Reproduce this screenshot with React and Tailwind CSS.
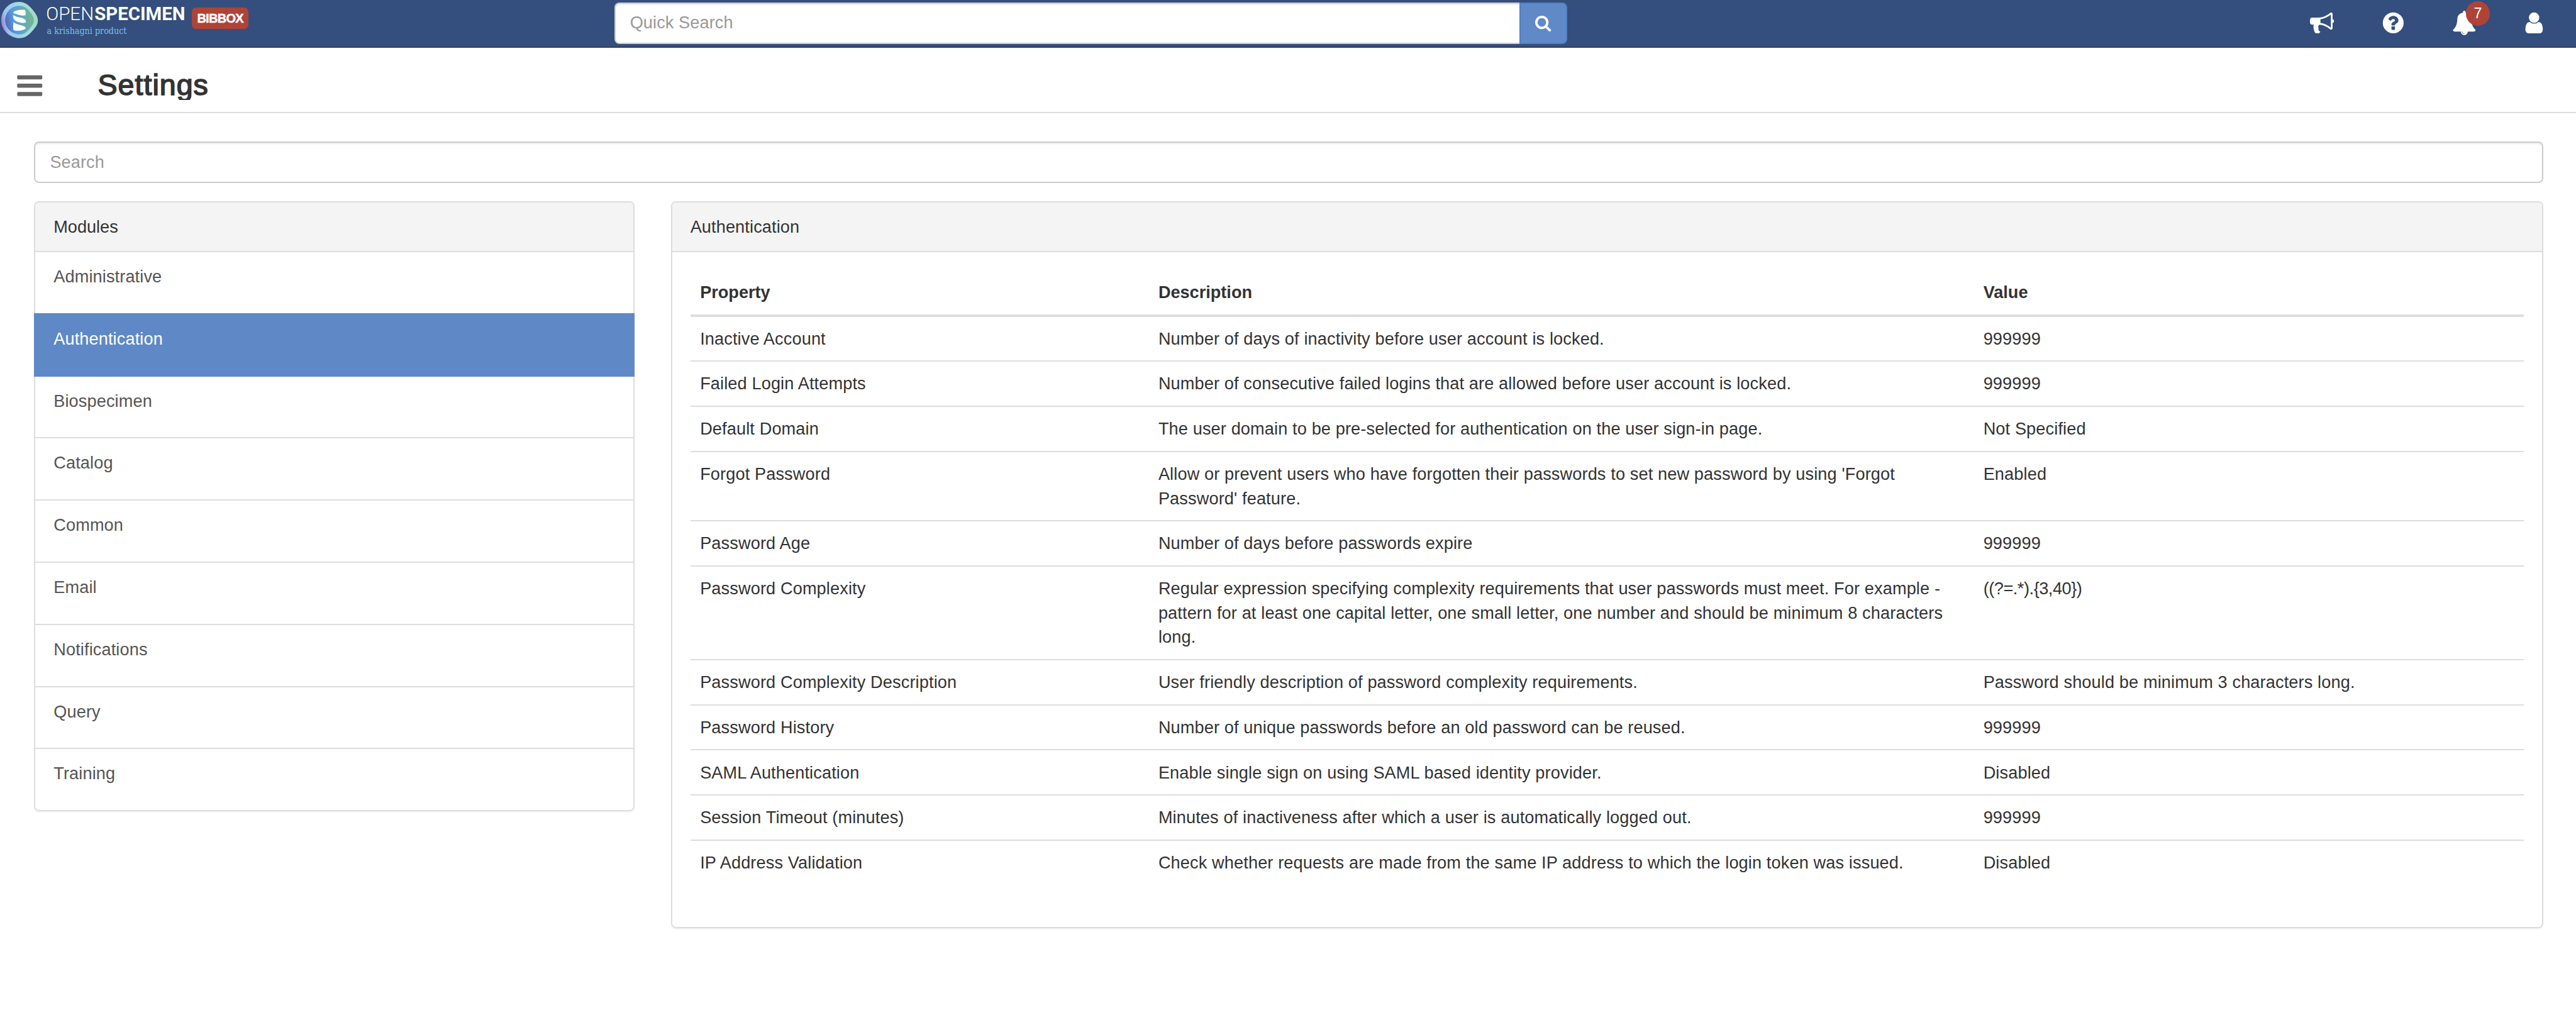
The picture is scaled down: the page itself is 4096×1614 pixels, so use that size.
const modules = [
  'Administrative',
  'Authentication',
  'Biospecimen',
  'Catalog',
  'Common',
  'Email',
  'Notifications',
  'Query',
  'Training',
];

const settings = [
  ['Inactive Account', 'Number of days of inactivity before user account is locked.', '999999'],
  ['Failed Login Attempts', 'Number of consecutive failed logins that are allowed before user account is locked.', '999999'],
  ['Default Domain', 'The user domain to be pre-selected for authentication on the user sign-in page.', 'Not Specified'],
  ['Forgot Password', "Allow or prevent users who have forgotten their passwords to set new password by using 'Forgot Password' feature.", 'Enabled'],
  ['Password Age', 'Number of days before passwords expire', '999999'],
  ['Password Complexity', 'Regular expression specifying complexity requirements that user passwords must meet. For example - pattern for at least one capital letter, one small letter, one number and should be minimum 8 characters long.', '((?=.*).{3,40})'],
  ['Password Complexity Description', 'User friendly description of password complexity requirements.', 'Password should be minimum 3 characters long.'],
  ['Password History', 'Number of unique passwords before an old password can be reused.', '999999'],
  ['SAML Authentication', 'Enable single sign on using SAML based identity provider.', 'Disabled'],
  ['Session Timeout (minutes)', 'Minutes of inactiveness after which a user is automatically logged out.', '999999'],
  ['IP Address Validation', 'Check whether requests are made from the same IP address to which the login token was issued.', 'Disabled'],
];

const icons = {
  bullhorn:
    'M1664 640q53 0 90.5 37.5t37.5 90.5-37.5 90.5-90.5 37.5v384q0 52-38 90t-90 38q-417-347-812-380-58 19-91 66t-31 100.5 40 92.5q-20 33-23 65.5t6 58 33.5 55 48 50 61.5 50.5q-29 58-111.5 83t-168.5 11.5-132-55.5q-7-23-29.5-87.5t-32-94.5-23-89-15-101 3.5-98.5 22-110.5h-122q-66 0-113-47t-47-113v-192q0-66 47-113t113-47h480q435 0 896-384 52 0 90 38t38 90v384zm-128 604v-954q-394 302-768 343v270q377 42 768 341z',
  question:
    'M1024 1376v-192q0-14-9-23t-23-9h-192q-14 0-23 9t-9 23v192q0 14 9 23t23 9h192q14 0 23-9t9-23zm256-672q0-88-55.5-163t-138.5-116-170-41q-243 0-371 213-15 24 8 42l132 100q7 6 19 6 16 0 25-12 53-68 86-92 34-24 86-24 48 0 85.5 26t37.5 59q0 38-20 61t-68 45q-63 28-115.5 86.5t-52.5 125.5v36q0 14 9 23t23 9h192q14 0 23-9t9-23q0-19 21.5-49.5t54.5-49.5q32-18 49-28.5t46-35 44.5-48 28-60.5 12.5-81zm384 192q0 209-103 385.5t-279.5 279.5-385.5 103-385.5-103-279.5-279.5-103-385.5 103-385.5 279.5-279.5 385.5-103 385.5 103 279.5 279.5 103 385.5z',
  bell:
    'M912 1696q0-16-16-16-59 0-101.5-42.5t-42.5-101.5q0-16-16-16t-16 16q0 73 51.5 124.5t124.5 51.5q16 0 16-16zm816-288q0 52-38 90t-90 38h-448q0 106-75 181t-181 75-181-75-75-181h-448q-52 0-90-38t-38-90q50-42 91-88t85-119.5 74.5-158.5 50-206 19.5-260q0-152 117-282.5t307-158.5q-8-19-8-39 0-40 28-68t68-28 68 28 28 68q0 20-8 39 190 28 307 158.5t117 282.5q0 139 19.5 260t50 206 74.5 158.5 85 119.5 91 88z',
  user:
    'M1536 1399q0 109-62.5 187t-150.5 78h-854q-88 0-150.5-78t-62.5-187q0-85 8.5-160.5t31.5-152 58.5-131 94-89 134.5-34.5q131 128 313 128t313-128q76 0 134.5 34.5t94 89 58.5 131 31.5 152 8.5 160.5zm-256-887q0 159-112.5 271.5t-271.5 112.5-271.5-112.5-112.5-271.5 112.5-271.5 271.5-112.5 271.5 112.5 112.5 271.5z',
  search:
    'M1216 832q0-185-131.5-316.5t-316.5-131.5-316.5 131.5-131.5 316.5 131.5 316.5 316.5 131.5 316.5-131.5 131.5-316.5zm512 832q0 52-38 90t-90 38q-54 0-90-38l-343-342q-179 124-399 124-143 0-273.5-55.5t-225-150-150-225-55.5-273.5 55.5-273.5 150-225 225-150 273.5-55.5 273.5 55.5 225 150 150 225 55.5 273.5q0 220-124 399l343 343q37 37 37 90z',
  bars:
    'M1664 1344v128q0 26-19 45t-45 19h-1408q-26 0-45-19t-19-45v-128q0-26 19-45t45-19h1408q26 0 45 19t19 45zm0-512v128q0 26-19 45t-45 19h-1408q-26 0-45-19t-19-45v-128q0-26 19-45t45-19h1408q26 0 45 19t19 45zm0-512v128q0 26-19 45t-45 19h-1408q-26 0-45-19t-19-45v-128q0-26 19-45t45-19h1408q26 0 45 19t19 45z',
};

function Icon({ name, className }) {
  return (
    <svg viewBox="0 0 1792 1792" fill="currentColor" className={className} aria-hidden="true">
      <path d={icons[name]} />
    </svg>
  );
}

function Logo() {
  return (
    <svg viewBox="0 0 306 76" className="h-[73.63px] w-[296.45px] shrink-0" role="img" aria-label="OpenSpecimen">
      <defs>
        <linearGradient id="ring" x1="0" y1="0.6" x2="1" y2="0.4">
          <stop offset="0" stopColor="#9a7ed2" />
          <stop offset="0.15" stopColor="#9fc4ee" />
          <stop offset="0.6" stopColor="#a4dbe8" />
          <stop offset="1" stopColor="#a0dabb" />
        </linearGradient>
        <linearGradient id="core" x1="0" y1="0.6" x2="1" y2="0.4">
          <stop offset="0" stopColor="#5565bd" />
          <stop offset="0.3" stopColor="#559dda" />
          <stop offset="1" stopColor="#74b98c" />
        </linearGradient>
      </defs>
      <path d="M31 3C43 3 50 11 56 19C64 29 64 37 58 45C51 54 44 62.7 32 62.7C18 62.7 2 51 2 33C2 17 15 3 31 3Z" fill="url(#ring)" />
      <path d="M31.500 9.500C41 9.500 46 15 51 22C57 30 57 36 52.500 42C47 50 41 56.500 32 56.500C21 56.500 8.500 47 8.500 33C8.500 20 19 9.500 31.500 9.500Z" fill="url(#core)" />
      <g fill="#fdfef8">
        <path d="M21.500 21C23 17.500 28 16 40 16Q42.300 16 42.300 24.500C40 26.500 34 25.500 29 24C25.500 22.800 22.500 22 21.500 21Z" />
        <path d="M22 24.500C25 27.500 31 28 36 29.500C40.500 31 43.500 33.500 42.500 37C39 38.500 33 37 28 35.500C23.500 33.500 20.500 30 22 24.500Z" />
        <path d="M22 36C25 39 30 40 35 41.500C40 43 43 44.500 42 47C37 51 27 51 22 49.500Q21 43 22 36Z" />
      </g>
      <g fill="#fdfef8" fontFamily="Roboto, sans-serif" fontSize="30.800">
        <text x="75.500" y="33.500" fontWeight="300" textLength="78.500" lengthAdjust="spacingAndGlyphs">OPEN</text>
        <text x="155" y="33.500" fontWeight="700" textLength="149" lengthAdjust="spacingAndGlyphs">SPECIMEN</text>
      </g>
      <text x="77" y="55.500" fill="#7fbfe8" fontFamily="'DejaVu Serif', serif" fontSize="15" textLength="131" lengthAdjust="spacingAndGlyphs">
        a krishagni product
      </text>
    </svg>
  );
}

function TopBar() {
  return (
    <header className="flex h-[75.56px] items-center border-b-2 border-[#36405a] bg-[#344e7e] text-white">
      <div className="flex h-full w-[976.5px] shrink-0 items-start">
        <Logo />
        <span className="mt-[11.6px] ml-[8.7px] flex h-[34.9px] w-[90.1px] items-center justify-center rounded-[7px] bg-[#b04337] text-[20px] font-bold tracking-[-0.7px] [-webkit-text-stroke:0.5px_white]">
          BIBBOX
        </span>
      </div>
      <div className="flex h-[65.88px]">
        <input
          placeholder="Quick Search"
          className="w-[1439.6px] rounded-l-[8px] border-y-2 border-l-2 border-[#ccc] bg-white px-[23.2px] tracking-[0.1px] shadow-[inset_0_2px_2px_rgba(0,0,0,0.075)] placeholder:text-[#999]"
        />
        <button className="flex w-[75.6px] items-center justify-center rounded-r-[8px] border-2 border-[#5080c0] bg-[#608ac7]">
          <Icon name="search" className="size-[27.13px]" />
        </button>
      </div>
      <nav className="ml-auto flex items-center pr-[47.5px]">
        <Icon name="bullhorn" className="size-[38.75px]" />
        <Icon name="question" className="ml-[74.6px] size-[38.75px]" />
        <span className="relative ml-[74.6px]">
          <Icon name="bell" className="size-[38.75px]" />
          <span className="absolute -top-[15.5px] left-[21.3px] flex size-[38.75px] items-center justify-center rounded-full bg-[#b04337] text-[23.25px] leading-none">
            7
          </span>
        </span>
        <Icon name="user" className="ml-[71.7px] size-[38.75px]" />
      </nav>
    </header>
  );
}

function ModuleList() {
  return (
    <aside className="w-[954.25px] shrink-0 rounded-[8px] border-2 border-[#ddd] shadow-[0_2px_2px_rgba(0,0,0,0.05)]">
      <h2 className="h-[79.38px] rounded-t-[6px] border-b-2 border-[#ddd] bg-[#f4f4f4] px-[29px] pt-[20px]">Modules</h2>
      <ul className="tracking-[0.13px] text-[#555]">
        {modules.map((name, i) => (
          <li
            key={name}
            className={
              name === 'Authentication'
                ? 'relative -mx-[2px] -mb-[2px] h-[100.75px] border-t-2 border-[#5f89c6] bg-[#5f89c6] px-[31px] pt-[20px] text-white'
                : i === 0
                  ? 'h-[96.88px] px-[29px] pt-[20px]'
                  : 'h-[98.81px] border-t-2 border-[#ddd] px-[29px] pt-[20px]'
            }
          >
            {name}
          </li>
        ))}
      </ul>
    </aside>
  );
}

function SettingsPanel() {
  return (
    <section className="h-[1156.7px] grow rounded-[8px] border-2 border-[#ddd] shadow-[0_2px_2px_rgba(0,0,0,0.05)]">
      <h2 className="h-[79.38px] rounded-t-[6px] border-b-2 border-[#ddd] bg-[#f4f4f4] px-[29px] pt-[20px] tracking-[0.13px]">
        Authentication
      </h2>
      <div className="px-[29px] pt-[29.06px]">
        <div className="grid h-[73.63px] grid-cols-[25%_45%_30%] border-b-4 border-[#ddd] pt-[16.1px] font-bold">
          <div className="px-[15.5px]">Property</div>
          <div className="px-[15.5px]">Description</div>
          <div className="px-[15.5px]">Value</div>
        </div>
        <div className="divide-y-2 divide-[#ddd] tracking-[0.14px]">
          {settings.map(([property, description, value]) => (
            <div key={property} className="grid grid-cols-[25%_45%_30%] pt-[16.1px] pb-[14.85px]">
              <div className="px-[15.5px]">{property}</div>
              <div className="px-[15.5px]">{description}</div>
              <div className={value.startsWith('((') ? 'px-[15.5px] tracking-[-0.45px]' : 'px-[15.5px]'}>{value}</div>
            </div>
          ))}
        </div>
      </div>
    </section>
  );
}

export default function App() {
  return (
    <div className="h-[1614px] w-[4096px] overflow-hidden bg-white font-['Liberation_Sans',Arial,sans-serif] text-[27.126px] leading-[38.75px] text-[#333]">
      <TopBar />
      <div className="flex h-[104.63px] items-start border-b-2 border-[#ddd]">
        <Icon name="bars" className="mt-[37.4px] ml-[23.8px] size-[46.5px] shrink-0 overflow-visible text-[#666]" />
        <h1 className="mt-[34px] ml-[85.2px] h-[49.4px] overflow-hidden text-[46.5px] leading-[50px] tracking-[1.05px] [-webkit-text-stroke:1.6px_#333]">
          Settings
        </h1>
      </div>
      <main className="px-[54.25px] pt-[44.57px]">
        <input
          placeholder="Search"
          className="block h-[65.88px] w-[3989.4px] rounded-[8px] border-2 border-[#ccc] px-[23.2px] tracking-[0.1px] shadow-[inset_0_2px_2px_rgba(0,0,0,0.075)] placeholder:text-[#999]"
        />
        <div className="mt-[29.06px] flex w-[3989.4px] items-start gap-[58.13px]">
          <ModuleList />
          <SettingsPanel />
        </div>
      </main>
    </div>
  );
}
